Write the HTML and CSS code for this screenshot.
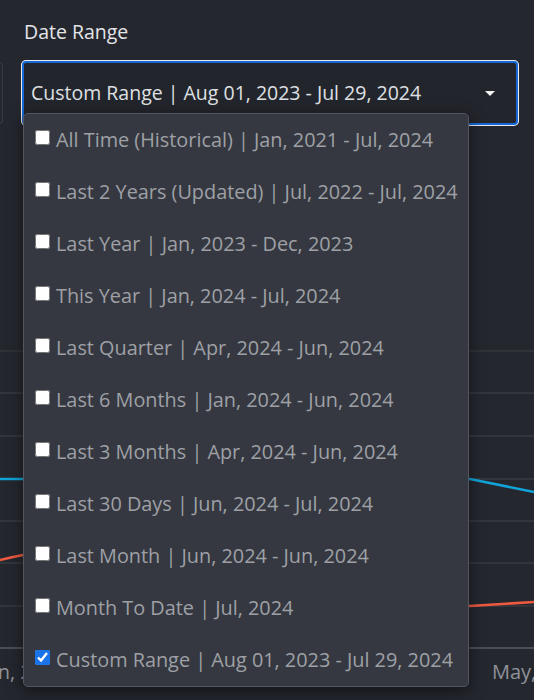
FILE: index.html
```html
<!DOCTYPE html>
<html lang="en">
<head>
<meta charset="utf-8">
<title>Date Range</title>
<link rel="stylesheet" href="styles.css">
</head>
<body>
<div class="page">
  <div class="filter">
    <div class="label">Date Range</div>
    <div class="controls">
      <div class="prev-control"></div>
      <div class="select-wrap">
        <div class="select">
          <span class="select-text">Custom Range | Aug 01, 2023 - Jul 29, 2024</span>
          <span class="caret"></span>
        </div>
        <ul class="menu">
          <li class="item"><input type="checkbox" class="check"><span>All Time (Historical) | Jan, 2021 - Jul, 2024</span></li>
          <li class="item"><input type="checkbox" class="check"><span>Last 2 Years (Updated) | Jul, 2022 - Jul, 2024</span></li>
          <li class="item"><input type="checkbox" class="check"><span>Last Year | Jan, 2023 - Dec, 2023</span></li>
          <li class="item"><input type="checkbox" class="check"><span>This Year | Jan, 2024 - Jul, 2024</span></li>
          <li class="item"><input type="checkbox" class="check"><span>Last Quarter | Apr, 2024 - Jun, 2024</span></li>
          <li class="item"><input type="checkbox" class="check"><span>Last 6 Months | Jan, 2024 - Jun, 2024</span></li>
          <li class="item"><input type="checkbox" class="check"><span>Last 3 Months | Apr, 2024 - Jun, 2024</span></li>
          <li class="item"><input type="checkbox" class="check"><span>Last 30 Days | Jun, 2024 - Jul, 2024</span></li>
          <li class="item"><input type="checkbox" class="check"><span>Last Month | Jun, 2024 - Jun, 2024</span></li>
          <li class="item"><input type="checkbox" class="check"><span>Month To Date | Jul, 2024</span></li>
          <li class="item"><input type="checkbox" class="check" checked><span>Custom Range | Aug 01, 2023 - Jul 29, 2024</span></li>
        </ul>
      </div>
    </div>
  </div>
  <div class="chart">
    <svg class="chart-svg" width="534" height="370" viewBox="0 0 534 370">
      <line x1="0" y1="22" x2="534" y2="22" class="grid-top"/>
      <line x1="0" y1="64" x2="534" y2="64" class="grid"/>
      <line x1="0" y1="107" x2="534" y2="107" class="grid"/>
      <line x1="0" y1="150" x2="534" y2="150" class="grid"/>
      <line x1="0" y1="192" x2="534" y2="192" class="grid"/>
      <line x1="0" y1="234" x2="534" y2="234" class="grid"/>
      <line x1="0" y1="277" x2="534" y2="277" class="grid"/>
      <line x1="0" y1="319" x2="534" y2="319" class="axis"/>
      <path d="M0 150 L470 150 L534 163" class="series-blue"/>
      <path d="M0 231 Q12 228 23 226 L470 277 L534 273" class="series-red"/>
      <text x="-20" y="350" class="tick">Jun, 2023</text>
      <text x="492" y="350" class="tick">May, 2024</text>
    </svg>
  </div>
</div>
</body>
</html>
```

FILE: styles.css
```css
* { box-sizing: border-box; }

html, body {
  margin: 0;
  padding: 0;
  background: #25272f;
  overflow: hidden;
}

body {
  font-family: "Open Sans", "Noto Sans", sans-serif;
  width: 534px;
  height: 700px;
}

.page {
  padding-top: 18px;
}

.label {
  padding-left: 24px;
  font-size: 19.5px;
  line-height: 28px;
  color: #e4e5e8;
}

.controls {
  display: flex;
  gap: 19px;
  margin-top: 15px;
}

.prev-control {
  width: 60px;
  height: 62px;
  margin-left: -57px;
  margin-top: 1px;
  border: 1px solid #393b42;
  border-radius: 4px;
}

.select-wrap {
  position: relative;
  width: 496px;
}

.select {
  height: 64px;
  display: flex;
  align-items: center;
  justify-content: space-between;
  padding: 0 21px 2px 7px;
  background: #23252c;
  border: 2px solid #1668d4;
  border-radius: 4px;
  box-shadow: 0 0 0 1px #e9ebee;
}

.select-text {
  font-size: 19.5px;
  color: #dfe0e3;
  white-space: nowrap;
}

.caret {
  width: 0;
  height: 0;
  margin-top: 2px;
  border-left: 5px solid transparent;
  border-right: 5px solid transparent;
  border-top: 5px solid #f2f2f2;
}

.menu {
  position: absolute;
  left: 1px;
  top: 52px;
  width: 446px;
  margin: 0;
  padding: 0;
  list-style: none;
  background: #353840;
  border: 1px solid #53565d;
  border-radius: 5px;
  box-shadow: 0 4px 16px rgba(0, 0, 0, 0.5);
}

.item {
  height: 52px;
  display: flex;
  align-items: center;
  gap: 6px;
  padding-left: 11px;
  padding-bottom: 2px;
  font-size: 19.85px;
  color: #9ea0a6;
  white-space: nowrap;
}

.check {
  width: 15px;
  height: 15px;
  margin: 0 0 3px 0;
  accent-color: #1a73e8;
}

.chart {
  margin-top: 204px;
}

.chart-svg {
  display: block;
}

.grid {
  stroke: #42454c;
  stroke-width: 1.2;
}

.grid-top {
  stroke: #35373d;
  stroke-width: 1.5;
}

.axis {
  stroke: #5a5d64;
  stroke-width: 1.5;
}

.series-blue {
  fill: none;
  stroke: #12a3d8;
  stroke-width: 2.5;
}

.series-red {
  fill: none;
  stroke: #ee5a40;
  stroke-width: 2.5;
}

.tick {
  font-family: "Open Sans", "Noto Sans", sans-serif;
  font-size: 20px;
  fill: #8f929a;
}
```
